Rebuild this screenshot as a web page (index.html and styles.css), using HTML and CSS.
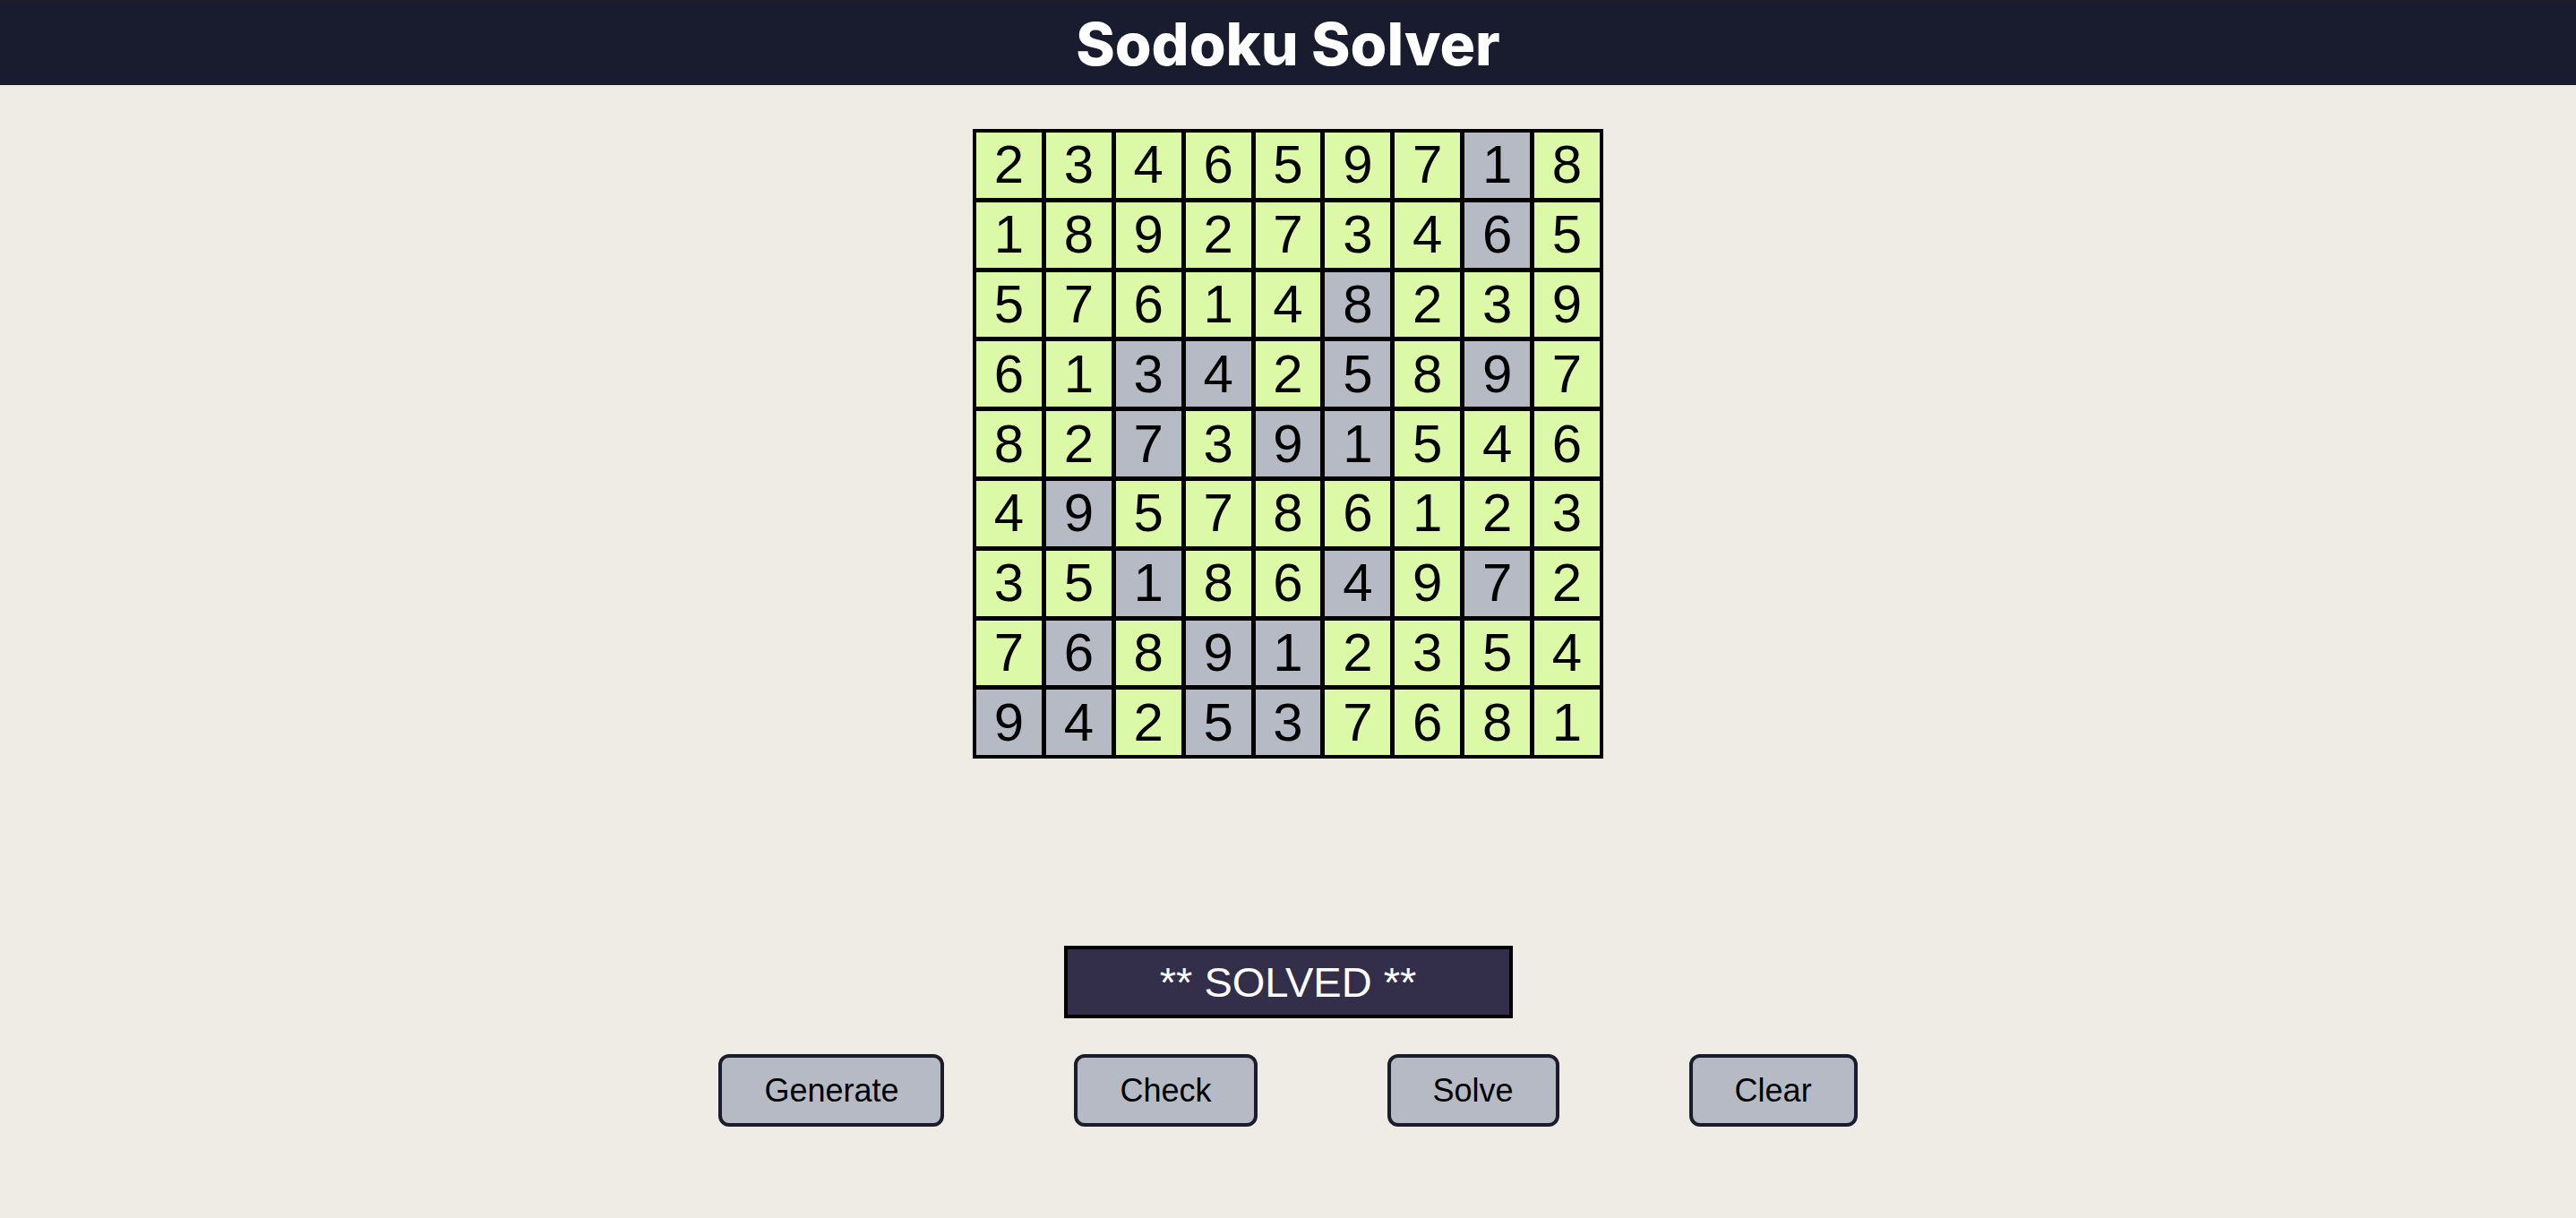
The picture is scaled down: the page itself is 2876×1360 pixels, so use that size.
FILE: index.html
```html
<!DOCTYPE html>
<html lang="en">
<head>
<meta charset="utf-8">
<title>Sodoku Solver</title>
<link rel="stylesheet" href="styles.css">
</head>
<body>
<header class="topbar"><h1 class="title">Sodoku Solver</h1></header>
<main class="main">
  <div class="board">
    <div class="cell">2</div><div class="cell">3</div><div class="cell">4</div><div class="cell">6</div><div class="cell">5</div><div class="cell">9</div><div class="cell">7</div><div class="cell given">1</div><div class="cell">8</div>
    <div class="cell">1</div><div class="cell">8</div><div class="cell">9</div><div class="cell">2</div><div class="cell">7</div><div class="cell">3</div><div class="cell">4</div><div class="cell given">6</div><div class="cell">5</div>
    <div class="cell">5</div><div class="cell">7</div><div class="cell">6</div><div class="cell">1</div><div class="cell">4</div><div class="cell given">8</div><div class="cell">2</div><div class="cell">3</div><div class="cell">9</div>
    <div class="cell">6</div><div class="cell">1</div><div class="cell given">3</div><div class="cell given">4</div><div class="cell">2</div><div class="cell given">5</div><div class="cell">8</div><div class="cell given">9</div><div class="cell">7</div>
    <div class="cell">8</div><div class="cell">2</div><div class="cell given">7</div><div class="cell">3</div><div class="cell given">9</div><div class="cell given">1</div><div class="cell">5</div><div class="cell">4</div><div class="cell">6</div>
    <div class="cell">4</div><div class="cell given">9</div><div class="cell">5</div><div class="cell">7</div><div class="cell">8</div><div class="cell">6</div><div class="cell">1</div><div class="cell">2</div><div class="cell">3</div>
    <div class="cell">3</div><div class="cell">5</div><div class="cell given">1</div><div class="cell">8</div><div class="cell">6</div><div class="cell given">4</div><div class="cell">9</div><div class="cell given">7</div><div class="cell">2</div>
    <div class="cell">7</div><div class="cell given">6</div><div class="cell">8</div><div class="cell given">9</div><div class="cell given">1</div><div class="cell">2</div><div class="cell">3</div><div class="cell">5</div><div class="cell">4</div>
    <div class="cell given">9</div><div class="cell given">4</div><div class="cell">2</div><div class="cell given">5</div><div class="cell given">3</div><div class="cell">7</div><div class="cell">6</div><div class="cell">8</div><div class="cell">1</div>
  </div>
  <div class="status">** SOLVED **</div>
  <div class="actions">
    <button class="btn">Generate</button>
    <button class="btn">Check</button>
    <button class="btn">Solve</button>
    <button class="btn">Clear</button>
  </div>
</main>
</body>
</html>
```
FILE: styles.css
```css
html, body {
  margin: 0;
  padding: 0;
}
body {
  background: #efece6;
  font-family: "Liberation Sans", Arial, sans-serif;
  min-height: 1360px;
}
.topbar {
  height: 95px;
  background: #191b2e;
  border-top: 2px solid #1d1e24;
  box-sizing: border-box;
  display: flex;
  align-items: center;
  justify-content: center;
}
.title {
  margin: 0;
  color: #ffffff;
  font-family: Inter, "Open Sans", sans-serif;
  font-weight: 800;
  font-size: 66px;
  letter-spacing: 0;
  line-height: 1;
}
.main {
  display: flex;
  flex-direction: column;
  align-items: center;
  padding-top: 49px;
}
.board {
  display: grid;
  grid-template-columns: repeat(9, 72.9px);
  grid-auto-rows: 72.8px;
  gap: 5px;
  background: #000;
  border: 4px solid #000;
}
.cell {
  background: #dbf9a6;
  color: #000;
  font-size: 60px;
  display: flex;
  align-items: center;
  justify-content: center;
  line-height: 1;
}
.cell.given {
  background: #b6bac4;
}
.status {
  margin-top: 209px;
  width: 493px;
  height: 73px;
  background: #332f4b;
  border: 4px solid #000;
  color: #ffffff;
  font-size: 47px;
  display: flex;
  align-items: center;
  justify-content: center;
}
.actions {
  margin-top: 40px;
  display: flex;
  gap: 145px;
}
.btn {
  height: 81px;
  padding: 0 47px;
  background: #b6bac4;
  border: 4px solid #1b1c2c;
  border-radius: 12px;
  font-family: "Liberation Sans", Arial, sans-serif;
  font-size: 36px;
  color: #000;
}
```
